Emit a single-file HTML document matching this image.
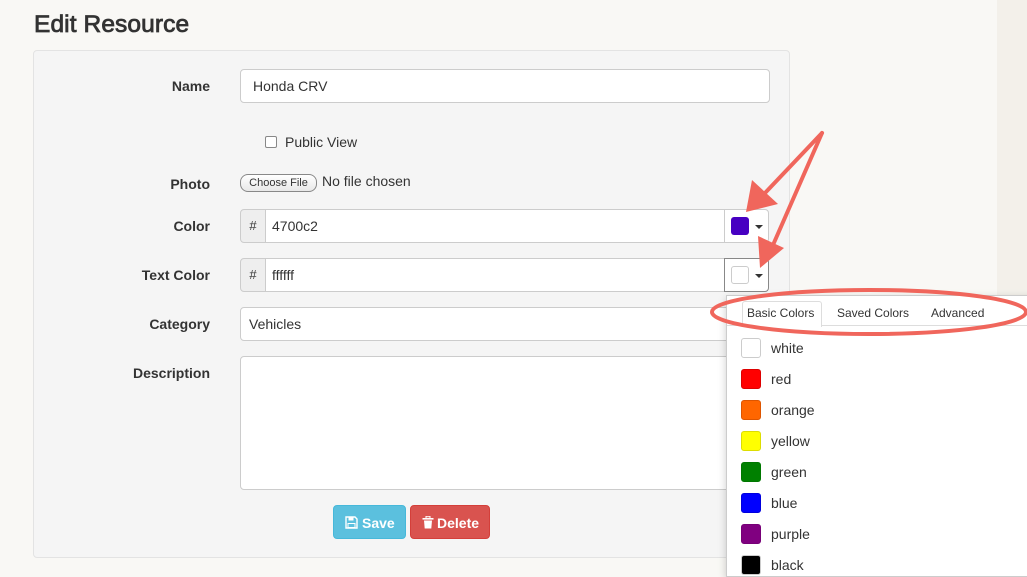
<!DOCTYPE html>
<html><head><style>
body{margin:0;width:1027px;height:567px;overflow:hidden;background:#f9f8f5;font-family:"Liberation Sans",sans-serif;color:#333;position:relative}
.strip{position:absolute;left:997px;top:0;width:30px;height:567px;background:#f3f0ea}
h1{position:absolute;left:34px;top:11px;margin:0;font-size:24.5px;font-weight:normal;color:#333;-webkit-text-stroke:0.8px #333;letter-spacing:0.1px}
.panel{position:absolute;left:33px;top:50px;width:755px;height:506px;background:#f5f5f5;border:1px solid #e3e3e3;border-radius:4px}
.lbl{position:absolute;width:210px;text-align:right;font-size:14px;font-weight:bold;left:0}
.inp{position:absolute;background:#fff;border:1px solid #ccc;border-radius:4px;box-sizing:border-box;font-size:14px;padding-left:12px;line-height:32px}
.a{position:absolute;font-size:14px}
.addon{position:absolute;left:240px;width:26px;height:34px;background:#eee;border:1px solid #ccc;border-radius:4px 0 0 4px;box-sizing:border-box;text-align:center;line-height:32px;font-size:13px}
.btnc{position:absolute;left:724px;width:45px;height:34px;background:#fff;border:1px solid #ccc;border-radius:0 4px 4px 0;box-sizing:border-box}
.sw{position:absolute;left:6px;top:7px;width:18px;height:18px;border-radius:3px}
.car{position:absolute;left:30px;top:15px;border-left:4px solid transparent;border-right:4px solid transparent;border-top:4px solid #333}
.dd{position:absolute;left:726px;top:295px;width:310px;height:280px;background:#fff;border:1px solid #ccc;box-shadow:0 3px 8px rgba(0,0,0,.2)}
.it{position:absolute;left:14px;font-size:14px}
.it i{position:absolute;left:0;top:0;width:18px;height:18px;border:1px solid #ccc;border-radius:3px}
.it span{position:absolute;left:30px;top:2px}
.btn{position:absolute;top:505px;height:34px;border-radius:4px;color:#fff;font-size:14px;font-weight:bold;line-height:34px;box-sizing:border-box}
.btn svg{position:absolute;top:10px}
</style></head><body>
<div class="strip"></div>
<h1>Edit Resource</h1>
<div class="panel"></div>
<div class="lbl" style="top:78px">Name</div>
<div class="inp" style="left:240px;top:69px;width:530px;height:34px">Honda CRV</div>
<div style="position:absolute;left:265px;top:136px;width:10px;height:10px;border:1px solid #888;border-radius:2px;background:#fff"></div>
<div class="a" style="left:285px;top:134px">Public View</div>
<div class="lbl" style="top:176px">Photo</div>
<div style="position:absolute;left:240px;top:174px;width:75px;height:16px;border:1px solid #888;border-radius:8px;background:linear-gradient(#fff,#e8e8e8);font-size:11px;text-align:center;line-height:16px">Choose File</div>
<div class="a" style="left:322px;top:173px">No file chosen</div>
<div class="lbl" style="top:218px">Color</div>
<div class="addon" style="top:209px">#</div>
<div class="inp" style="left:265px;top:209px;width:460px;height:34px;border-radius:0;padding-left:6px">4700c2</div>
<div class="btnc" style="top:209px"><div class="sw" style="background:#4700c2"></div><div class="car"></div></div>
<div class="lbl" style="top:267px">Text Color</div>
<div class="addon" style="top:258px">#</div>
<div class="inp" style="left:265px;top:258px;width:460px;height:34px;border-radius:0;padding-left:6px">ffffff</div>
<div class="btnc" style="top:258px;border-color:#888"><div class="sw" style="background:#fff;border:1px solid #ccc;width:16px;height:16px"></div><div class="car"></div></div>
<div class="lbl" style="top:316px">Category</div>
<div class="inp" style="left:240px;top:307px;width:530px;height:34px;padding-left:8px">Vehicles</div>
<div class="lbl" style="top:365px">Description</div>
<div class="inp" style="left:240px;top:356px;width:530px;height:134px"></div>
<div class="btn" style="left:333px;width:73px;background:#5bc0de;border:1px solid #46b8da"><svg style="left:11px" width="13" height="13" viewBox="0 0 13 13"><path d="M1 1h9l2 2v9H1z" fill="none" stroke="#fff" stroke-width="1.4"/><rect x="3.5" y="1" width="5" height="3.5" fill="#fff"/><rect x="3" y="7.5" width="7" height="4" fill="none" stroke="#fff"/></svg><span style="position:absolute;left:28px">Save</span></div>
<div class="btn" style="left:410px;width:80px;background:#d9534f;border:1px solid #d43f3a"><svg style="left:11px" width="12" height="13" viewBox="0 0 12 13"><rect x="0.5" y="2" width="11" height="1.6" fill="#fff"/><rect x="4" y="0.3" width="4" height="2" fill="none" stroke="#fff" stroke-width="1"/><path d="M2 4.5h8l-0.7 8H2.7z" fill="#fff"/></svg><span style="position:absolute;left:26px">Delete</span></div>
<div class="dd">
<div style="position:absolute;left:0;top:29px;width:310px;border-top:1px solid #ddd"></div>
<div style="position:absolute;left:15px;top:5px;width:78px;height:25px;background:#fff;border:1px solid #ddd;border-bottom:none;border-radius:3px 3px 0 0"></div>
<div style="position:absolute;left:20px;top:10px;font-size:12px">Basic Colors</div>
<div style="position:absolute;left:110px;top:10px;font-size:12px">Saved Colors</div>
<div style="position:absolute;left:204px;top:10px;font-size:12px">Advanced</div>
<div class="it" style="top:42px"><i style="background:#fff"></i><span>white</span></div>
<div class="it" style="top:73px"><i style="background:#f00;border-color:#d00"></i><span>red</span></div>
<div class="it" style="top:104px"><i style="background:#f60;border-color:#d50"></i><span>orange</span></div>
<div class="it" style="top:135px"><i style="background:#ff0;border-color:#dd0"></i><span>yellow</span></div>
<div class="it" style="top:166px"><i style="background:#008000;border-color:#070"></i><span>green</span></div>
<div class="it" style="top:197px"><i style="background:#00f;border-color:#00d"></i><span>blue</span></div>
<div class="it" style="top:228px"><i style="background:#800080;border-color:#707"></i><span>purple</span></div>
<div class="it" style="top:259px"><i style="background:#000"></i><span>black</span></div>
</div>
<svg width="1027" height="567" style="position:absolute;left:0;top:0">
<g stroke="#f0665c" stroke-width="4" fill="none" stroke-linecap="round">
<line x1="822" y1="133" x2="765" y2="193"/>
<line x1="822" y1="133" x2="773" y2="245"/>
<ellipse cx="869" cy="312" rx="157" ry="22"/>
</g>
<polygon points="746,212 752,180 778,204" fill="#f0665c"/>
<polygon points="760,268 758,236 784,248" fill="#f0665c"/>
</svg>
</body></html>
